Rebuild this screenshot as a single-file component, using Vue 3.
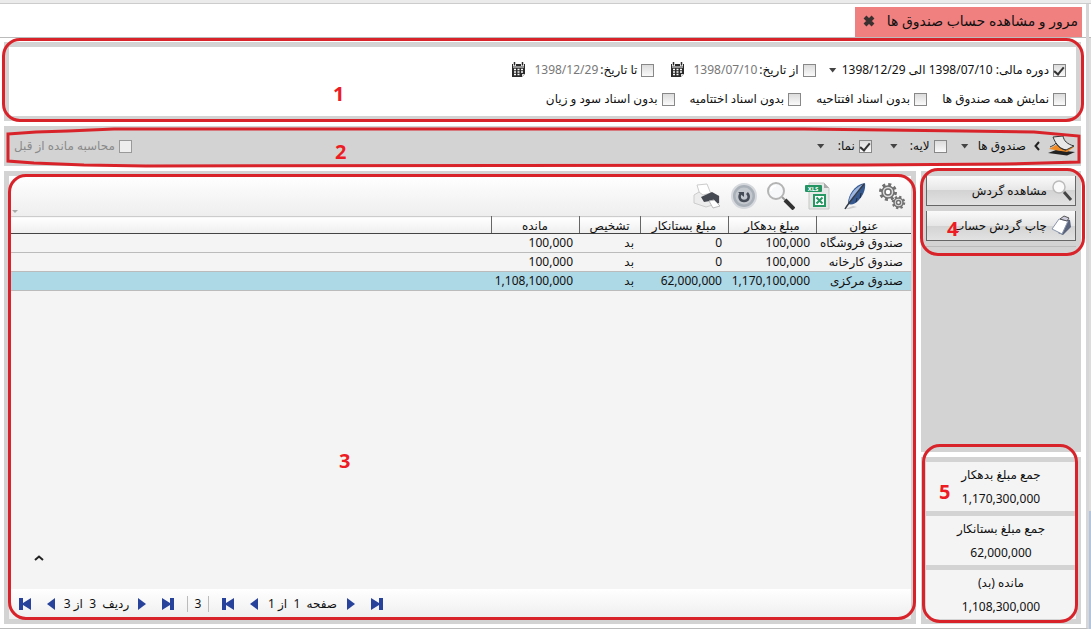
<script setup>
const options = [
  { id: 'all', label: 'نمایش همه صندوق ها' },
  { id: 'opening', label: 'بدون اسناد افتتاحیه' },
  { id: 'closing', label: 'بدون اسناد اختتامیه' },
  { id: 'profit', label: 'بدون اسناد سود و زیان' },
]
const dates = [
  { id: 'from', label: 'از تاریخ:', value: '1398/07/10' },
  { id: 'to', label: 'تا تاریخ:', value: '1398/12/29' },
]
const rows = [
  { title: 'صندوق فروشگاه', debit: '100,000', credit: '0', kind: 'بد', balance: '100,000' },
  { title: 'صندوق کارخانه', debit: '100,000', credit: '0', kind: 'بد', balance: '100,000' },
  { title: 'صندوق مرکزی', debit: '1,170,100,000', credit: '62,000,000', kind: 'بد', balance: '1,108,100,000', selected: true },
]
const totals = [
  { label: 'جمع مبلغ بدهکار', value: '1,170,300,000' },
  { label: 'جمع مبلغ بستانکار', value: '62,000,000' },
  { label: 'مانده (بد)', value: '1,108,300,000' },
]
</script>

<template>
  <div class="page" dir="rtl">
    <div class="strip"></div>
    <div class="shell">
      <div class="rail"><i class="rail-top"></i><i class="rail-mid"></i><i class="rail-low"></i></div>
      <div class="frame">
        <header class="tabs">
          <div class="tab">
            <span>مرور و مشاهده حساب صندوق ها</span>
            <button class="icon-btn" aria-label="بستن">
              <svg width="12" height="12" viewBox="0 0 12 12"><path d="M2 2l8 8M10 2l-8 8" stroke="#3a3030" stroke-width="4" /></svg>
            </button>
          </div>
        </header>

        <main class="content">
          <section class="panel filters">
            <div class="filter-body">
              <div class="line">
                <label class="check"><input type="checkbox" checked /><span>دوره مالی: 1398/07/10 الی 1398/12/29</span></label>
                <button class="icon-btn caret period" aria-label="انتخاب دوره"></button>
                <div v-for="d in dates" :key="d.id" class="date">
                  <label class="check"><input type="checkbox" /><span>{{ d.label }}</span></label>
                  <span class="date-value">{{ d.value }}</span>
                  <button class="icon-btn cal" aria-label="تقویم">
                    <svg width="15" height="16" viewBox="0 0 15 16">
                      <path d="M1 2h13v10l-3 3H1z" fill="#2b2b2b" />
                      <path d="M3.500 0v4M11.500 0v4" stroke="#fff" stroke-width="3" />
                      <path d="M3.500 0v3.500M11.500 0v3.500" stroke="#2b2b2b" stroke-width="1.500" />
                      <path d="M2 5h11" stroke="#fff" />
                      <path d="M3 7.500h2M6.500 7.500h2M10 7.500h2M3 10h2M6.500 10h2M10 10h2M3 12.500h2M6.500 12.500h2" stroke="#fff" stroke-width="1.500" />
                      <path d="M11 15v-3h3z" fill="#ddd" />
                    </svg>
                  </button>
                </div>
              </div>
              <div class="line options">
                <label v-for="o in options" :key="o.id" class="check"><input type="checkbox" /><span>{{ o.label }}</span></label>
              </div>
            </div>
            <span class="mark mark-1"></span>
            <b class="num num-1">1</b>
          </section>

          <section class="panel layers">
            <svg class="stack" width="28" height="20" viewBox="0 0 28 20">
              <path d="M0 17l8-3 19 2-8 3.500z" fill="#222" />
              <path d="M1 13l7-4 18 2-7 5z" fill="#f08a24" />
              <path d="M5 1l10-1c1 5 4 8 11 10l-8 4c-5 0-10-5-13-13z" fill="#e8e8e8" stroke="#333" />
              <path d="M2 11c2-1 5-2 6-4 2 4 6 6 10 7" fill="none" stroke="#333" />
            </svg>
            <svg class="chev" width="6" height="10" viewBox="0 0 6 10"><path d="M5 1L1.500 5 5 9" fill="none" stroke="#222" stroke-width="2" /></svg>
            <span>صندوق ها</span>
            <button class="icon-btn caret c1" aria-label="صندوق ها"></button>
            <label class="check"><input type="checkbox" /><span>لایه:</span></label>
            <button class="icon-btn caret c2" aria-label="لایه"></button>
            <label class="check"><input type="checkbox" checked /><span>نما:</span></label>
            <button class="icon-btn caret c3" aria-label="نما"></button>
            <label class="check previous"><input type="checkbox" disabled /><span>محاسبه مانده از قبل</span></label>
            <svg class="sketch" viewBox="0 0 1077 40" preserveAspectRatio="none">
              <path d="M4 8L32 6 64 5 110 3H800L960 5 1030 6 1075 10V36L1000 38 860 39 142 40 80 39 30 37 4 35Z" fill="none" stroke="#d8232a" stroke-width="3" vector-effect="non-scaling-stroke" />
            </svg>
            <b class="num num-2">2</b>
          </section>

          <div class="columns">
            <aside class="side">
              <section class="panel actions">
                <button class="action">
                  <svg width="22" height="22" viewBox="0 0 22 22"><path d="M13 12l7 8" stroke="#444" stroke-width="3" /><circle cx="8" cy="7" r="6" fill="#fafafa" stroke="#bbb" stroke-width="1.500" /></svg>
                  <span>مشاهده گردش</span>
                </button>
                <button class="action">
                  <svg width="22" height="22" viewBox="0 0 22 22">
                    <path d="M14 4l5 1 1 7-8 8-5-2z" fill="#59647c" />
                    <path d="M8 4l9 2-6 13L1 14z" fill="#fff" stroke="#8b96ad" />
                    <path d="M9 4l4-3 5 2-2 3z" fill="#ccd" stroke="#555" />
                  </svg>
                  <span>چاپ گردش حساب</span>
                </button>
                <span class="mark mark-4"></span>
                <b class="num num-4">4</b>
              </section>
              <section class="panel totals">
                <div v-for="t in totals" :key="t.label" class="total">
                  <div>{{ t.label }}</div>
                  <div>{{ t.value }}</div>
                </div>
                <span class="mark mark-5"></span>
                <b class="num num-5">5</b>
              </section>
            </aside>

            <section class="panel grid">
              <div class="grid-body">
                <div class="toolbar">
                  <button class="icon-btn" aria-label="تنظیمات">
                    <svg width="28" height="28" viewBox="0 0 28 28">
                      <g fill="none" stroke="#707070">
                        <circle cx="10" cy="10" r="7.500" stroke-width="3" stroke-dasharray="3 2.890" />
                        <circle cx="10" cy="10" r="6" fill="#dcdcdc" stroke-width="1.500" />
                        <circle cx="10" cy="10" r="3" fill="#fff" stroke-width="1.500" />
                        <circle cx="20.500" cy="20.500" r="5.500" stroke-width="2.500" stroke-dasharray="2.200 2.120" />
                        <circle cx="20.500" cy="20.500" r="4.500" fill="#dcdcdc" stroke-width="1.500" />
                        <circle cx="20.500" cy="20.500" r="2" fill="#fff" stroke-width="1.500" />
                      </g>
                    </svg>
                  </button>
                  <button class="icon-btn" aria-label="ویرایش">
                    <svg width="28" height="28" viewBox="0 0 28 28">
                      <path d="M4 27l8-3 4 1-8 2z" fill="#ccc" />
                      <path d="M7 22C7 13 13 3 24 1c1 6-2 13-7 18-3 3-6 4-10 3z" fill="#35588f" />
                      <path d="M8 19C9 11 16 4 23 2 19 8 14 15 8 20z" fill="#9db6df" />
                      <path d="M4 27C8 20 16 11 23 2" stroke="#333b48" fill="none" stroke-width="1.500" />
                      <path d="M15 20l1-4M19 16l1-5" stroke="#222c3c" />
                    </svg>
                  </button>
                  <button class="icon-btn" aria-label="خروجی اکسل">
                    <svg width="28" height="28" viewBox="0 0 28 28">
                      <path d="M5 1h15l5 5v21H5z" fill="#e6e8e7" stroke="#c5c8c6" />
                      <path d="M20 1v5h5z" fill="#aaa" />
                      <rect x="1" y="3" width="17" height="7" rx="1" fill="#249462" />
                      <text x="9" y="9" fill="#fff" font-family="Noto Sans" font-size="6" font-weight="700" text-anchor="middle">XLS</text>
                      <rect x="9" y="12" width="13" height="13" fill="#279763" />
                      <rect x="11" y="14" width="9" height="9" fill="#fff" />
                      <path d="M12.500 15.500l6 6M18.500 15.500l-6 6" stroke="#279763" stroke-width="2" />
                    </svg>
                  </button>
                  <button class="icon-btn" aria-label="جستجو">
                    <svg width="28" height="28" viewBox="0 0 28 28">
                      <path d="M15 15l4 4" stroke="#999" stroke-width="2" />
                      <path d="M18 18l9 9" stroke="#333" stroke-width="4" />
                      <circle cx="9" cy="9" r="8" fill="#f6f8fa" stroke="#b4b4b4" stroke-width="2" />
                      <path d="M4 9c0-3 2-5 5-5" stroke="#fff" stroke-width="2" fill="none" />
                    </svg>
                  </button>
                  <button class="icon-btn" aria-label="بازخوانی">
                    <svg width="28" height="28" viewBox="0 0 28 28">
                      <circle cx="14" cy="14" r="12" fill="#a9b0b8" stroke="#d5d8dc" stroke-width="2" />
                      <circle cx="14" cy="14" r="8.500" fill="#c3c8ce" />
                      <path d="M11 11c-3 4-1 8 3 8 5 0 6-5 3-8" fill="none" stroke="#454c56" stroke-width="2.500" />
                      <path d="M8 10h6v5z" fill="#454c56" />
                    </svg>
                  </button>
                  <button class="icon-btn" aria-label="چاپ">
                    <svg width="28" height="28" viewBox="0 0 28 28">
                      <path d="M4 3l10-1 4 10-10 4z" fill="#fff" stroke="#ccc" />
                      <path d="M1 13l5-3 4 3 8-2 8 3v7l-13 4-12-4z" fill="#ececec" stroke="#ccc" />
                      <path d="M8 15l11-5 7 4v7l-4 1-5-3-6 1z" fill="#454a52" />
                      <path d="M16 19l5-1 6 6-7 2z" fill="#fff" stroke="#bbb" />
                    </svg>
                  </button>
                  <i class="corner"></i>
                </div>
                <table>
                  <colgroup><col class="w-title" /><col class="w-debit" /><col class="w-credit" /><col class="w-kind" /><col class="w-balance" /><col /></colgroup>
                  <thead>
                    <tr><th>عنوان</th><th>مبلغ بدهکار</th><th>مبلغ بستانکار</th><th>تشخیص</th><th>مانده</th><th></th></tr>
                  </thead>
                  <tbody>
                    <tr v-for="r in rows" :key="r.title" :class="{ selected: r.selected }">
                      <td>{{ r.title }}</td><td>{{ r.debit }}</td><td>{{ r.credit }}</td><td>{{ r.kind }}</td><td>{{ r.balance }}</td><td></td>
                    </tr>
                  </tbody>
                </table>
                <div class="blank">
                  <button class="icon-btn" aria-label="بالا">
                    <svg width="10" height="6" viewBox="0 0 10 6"><path d="M1 5l4-3.500L9 5" fill="none" stroke="#222" stroke-width="2" /></svg>
                  </button>
                </div>
                <nav class="pager" dir="ltr">
                  <button class="icon-btn" aria-label="آخرین ردیف"><svg width="12" height="12" viewBox="0 0 12 12"><path d="M0 0h4v5l8-5v12L4 7v5H0z" fill="#27429a" /></svg></button>
                  <button class="icon-btn" aria-label="ردیف بعد"><svg width="8" height="12" viewBox="0 0 8 12"><path d="M8 0v12L0 6z" fill="#27429a" /></svg></button>
                  <span class="pos pos-row" dir="rtl">ردیف&nbsp; 3 &nbsp;از 3</span>
                  <button class="icon-btn" aria-label="ردیف قبل"><svg width="8" height="12" viewBox="0 0 8 12"><path d="M0 0v12l8-6z" fill="#27429a" /></svg></button>
                  <button class="icon-btn" aria-label="اولین ردیف"><svg width="12" height="12" viewBox="0 0 12 12"><path d="M12 0H8v5L0 0v12l8-5v5h4z" fill="#27429a" /></svg></button>
                  <span class="count">3</span>
                  <button class="icon-btn" aria-label="آخرین صفحه"><svg width="12" height="12" viewBox="0 0 12 12"><path d="M0 0h4v5l8-5v12L4 7v5H0z" fill="#27429a" /></svg></button>
                  <button class="icon-btn" aria-label="صفحه بعد"><svg width="8" height="12" viewBox="0 0 8 12"><path d="M8 0v12L0 6z" fill="#27429a" /></svg></button>
                  <span class="pos pos-page" dir="rtl">صفحه&nbsp; 1 &nbsp;از 1</span>
                  <button class="icon-btn" aria-label="صفحه قبل"><svg width="8" height="12" viewBox="0 0 8 12"><path d="M0 0v12l8-6z" fill="#27429a" /></svg></button>
                  <button class="icon-btn" aria-label="اولین صفحه"><svg width="12" height="12" viewBox="0 0 12 12"><path d="M12 0H8v5L0 0v12l8-5v5h4z" fill="#27429a" /></svg></button>
                </nav>
              </div>
              <span class="mark mark-3"></span>
              <b class="num num-3">3</b>
            </section>
          </div>
        </main>
      </div>
    </div>
  </div>
</template>

<style>
html, body, #app { height: 100%; }
</style>

<style scoped>
* { box-sizing: border-box; }
.page {
  min-height: 100%;
  display: flex;
  flex-direction: column;
  background: #fff;
  color: #111;
  font: 12px/16px "Noto Sans", "DejaVu Sans", sans-serif;
}
.strip { height: 4px; background: #ebebeb; border-bottom: 1px solid #ccc; }
.shell { flex: 1; display: flex; }
.rail { display: flex; flex-direction: column; width: 2px; }
.rail-top { height: 34px; background: #fff; border-bottom: 1px solid #bbb; }
.rail-mid { flex: 4; background: #dcdcdc; }
.rail-low { flex: 1; background: #b4c4da; }
.frame { flex: 1; display: flex; flex-direction: column; border-right: 3px solid #d6d6d9; border-bottom: 1px solid #bbb; }
button { font: inherit; color: inherit; }
.icon-btn { display: block; flex: none; padding: 0; border: 0; background: none; }
svg { display: block; flex: none; }
.tabs { height: 34px; padding: 3px 4px 0; border-bottom: 1px solid #bbb; }
.tab { display: flex; align-items: center; justify-content: space-between; width: 227px; height: 30px; padding: 0 4px 2px 8px; background: #f08080; font-size: 14px; white-space: nowrap; }
.content { flex: 1; display: flex; flex-direction: column; gap: 5px; padding: 4px 5px 4px 4px; }
.panel { position: relative; padding: 5px; background: #d3d3d3; }
.filter-body { display: flex; flex-direction: column; gap: 13px; padding: 15px 10px 9px; background: #fff; }
.line { display: flex; align-items: center; height: 16px; }
.options { gap: 15px; }
.check { display: flex; align-items: center; gap: 4px; white-space: nowrap; }
input { appearance: none; flex: none; width: 13px; height: 13px; margin: 0; border: 1px solid #888; background: linear-gradient(#dcdcdc, #fafafa); }
input:checked::after { content: ""; display: block; width: 4px; height: 8px; margin: 0 3px; border: solid #333; border-width: 0 2px 2px 0; transform: rotate(40deg); }
input:disabled { border-color: #999; background: #eee; }
.caret { width: 8px; height: 5px; background: #444; clip-path: polygon(0 0, 100% 0, 50% 100%); }
.period { margin: 0 5px 0 13px; }
.date { display: flex; align-items: center; gap: 2px; margin-left: 16px; }
.date-value { color: #777; }
.cal { margin-right: 6px; }
.layers { display: flex; align-items: center; height: 40px; padding: 0 5px; }
.chev { margin: 0 8px; }
.c1 { margin: 0 9px 0 14px; }
.c2 { margin: 0 12px 0 18px; }
.c3 { margin-right: 13px; }
.previous { margin: 0 auto 0 5px; color: #8a8a8a; }
.columns { flex: 1; display: flex; gap: 5px; }
.side { width: 160px; display: flex; flex-direction: column; gap: 5px; }
.actions { flex: 1; display: flex; flex-direction: column; gap: 5px; }
.actions::after { content: ""; border-top: 1px solid #bbb; }
.action { display: flex; align-items: center; gap: 4px; height: 30px; padding: 0 2px; border: solid #666; border-width: 0 1px 1px; background: linear-gradient(#fafafa, #e6e6e6 50%, #d3d3d3 50%, #e2e2e2); white-space: nowrap; }
.totals { display: flex; flex-direction: column; gap: 5px; }
.total { display: flex; flex-direction: column; gap: 8px; height: 49px; padding: 5px 0; background: #f4f4f4; text-align: center; }
.grid { flex: 1; display: flex; }
.grid-body { flex: 1; display: flex; flex-direction: column; background: #f4f4f4; }
.toolbar { position: relative; display: flex; gap: 9px; height: 40px; padding: 6px 5px; background: linear-gradient(#fff, #eee); }
.corner { position: absolute; left: 3px; bottom: 3px; width: 6px; height: 3px; background: #aaa; clip-path: polygon(0 0, 100% 0, 50% 100%); }
table { width: 100%; table-layout: fixed; border-collapse: collapse; }
.w-title { width: 95px; }
.w-debit { width: 88px; }
.w-credit { width: 88px; }
.w-kind { width: 61px; }
.w-balance { width: 88px; }
th { height: 17px; padding: 0; border-top: 1px solid #ccc; border-bottom: 1px solid #444; border-left: 1px solid #666; background: linear-gradient(#fff, #eee); font-weight: 400; line-height: 15px; white-space: nowrap; }
th:last-child { border-left: 0; }
td { height: 19px; padding: 0 6px 0 0; border-bottom: 1px solid #bbb; line-height: 18px; white-space: nowrap; }
td:first-child { padding-right: 8px; }
.selected { background: #add8e6; }
.blank { flex: 1; display: flex; flex-direction: column; justify-content: flex-end; align-items: flex-end; padding: 28px 25px; }
.pager { display: flex; align-items: center; gap: 16px; height: 30px; padding: 0 10px; background: linear-gradient(#fff, #eee); }
.pos { text-align: center; white-space: nowrap; }
.pos-row { width: 69px; margin: 0 -9px; }
.pos-page { width: 73px; margin: 0 -8px; }
.count { width: 22px; margin: 0 -3px; border: solid #bbb; border-width: 0 1px; text-align: center; }
.mark { position: absolute; border: 3px solid #d8232a; border-radius: 18px; pointer-events: none; }
.mark-1 { inset: -4px -3px -1px -2px; }
.mark-3 { inset: 3px 0 4px 4px; }
.mark-4 { top: -3px; right: -4px; left: -1px; height: 88px; }
.mark-5 { inset: -13px 3px 1px 1px; }
.sketch { position: absolute; inset: 0; width: 100%; height: 100%; overflow: visible; pointer-events: none; }
.num { position: absolute; color: #ed1c24; font: 700 20px/20px "Noto Sans", sans-serif; }
.num-1 { left: 329px; top: 42px; }
.num-2 { left: 331px; top: 16px; }
.num-3 { left: 335px; top: 280px; }
.num-4 { left: 26px; top: 48px; }
.num-5 { left: 18px; top: 25px; }
</style>
